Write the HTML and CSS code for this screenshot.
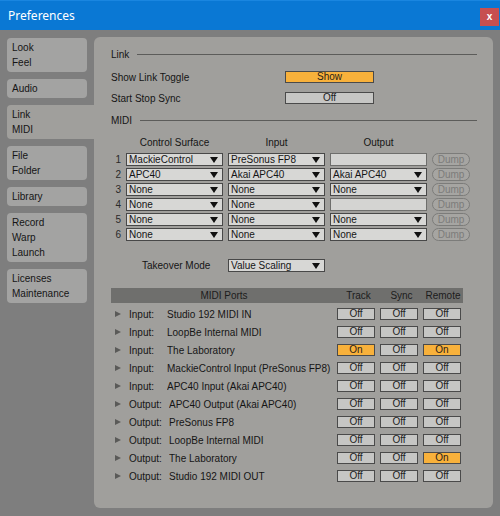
FILE: index.html
```html
<!DOCTYPE html>
<html>
<head>
<meta charset="utf-8">
<link rel="stylesheet" href="styles.css">
</head>
<body>
<div class="titlebar">
  <span class="title">Preferences</span>
  <span class="close">x</span>
</div>
<div class="content">
  <div class="sidebar">
    <div class="tab"><div>Look</div><div>Feel</div></div>
    <div class="tab"><div>Audio</div></div>
    <div class="tab selected"><div>Link</div><div>MIDI</div></div>
    <div class="tab"><div>File</div><div>Folder</div></div>
    <div class="tab"><div>Library</div></div>
    <div class="tab"><div>Record</div><div>Warp</div><div>Launch</div></div>
    <div class="tab"><div>Licenses</div><div>Maintenance</div></div>
  </div>
  <div class="panel">
    <div class="heading">Link</div>
    <div class="setting first"><span class="label">Show Link Toggle</span><span class="btn wide on">Show</span></div>
    <div class="setting"><span class="label">Start Stop Sync</span><span class="btn wide">Off</span></div>
    <div class="heading midi">MIDI</div>

    <div class="surfaces">
      <div class="colhead"></div><div class="colhead">Control Surface</div><div class="colhead">Input</div><div class="colhead">Output</div><div class="colhead"></div>

      <div class="num">1</div><div class="dd">MackieControl</div><div class="dd">PreSonus FP8</div><div class="dd empty"></div><div class="dump">Dump</div>
      <div class="num">2</div><div class="dd">APC40</div><div class="dd">Akai APC40</div><div class="dd">Akai APC40</div><div class="dump">Dump</div>
      <div class="num">3</div><div class="dd">None</div><div class="dd">None</div><div class="dd">None</div><div class="dump">Dump</div>
      <div class="num">4</div><div class="dd">None</div><div class="dd">None</div><div class="dd empty"></div><div class="dump">Dump</div>
      <div class="num">5</div><div class="dd">None</div><div class="dd">None</div><div class="dd">None</div><div class="dump">Dump</div>
      <div class="num">6</div><div class="dd">None</div><div class="dd">None</div><div class="dd">None</div><div class="dump">Dump</div>
    </div>

    <div class="takeover"><span class="tlabel">Takeover Mode</span><div class="dd">Value Scaling</div></div>

    <div class="ports">
      <div class="phead">
        <span class="pname">MIDI Ports</span><span class="pcol">Track</span><span class="pcol">Sync</span><span class="pcol">Remote</span>
      </div>
      <div class="prow"><span class="tri"></span><span class="ptype">Input:</span><span class="pdev">Studio 192 MIDI IN</span><span class="btn">Off</span><span class="btn">Off</span><span class="btn">Off</span></div>
      <div class="prow"><span class="tri"></span><span class="ptype">Input:</span><span class="pdev">LoopBe Internal MIDI</span><span class="btn">Off</span><span class="btn">Off</span><span class="btn">Off</span></div>
      <div class="prow"><span class="tri"></span><span class="ptype">Input:</span><span class="pdev">The Laboratory</span><span class="btn on">On</span><span class="btn">Off</span><span class="btn on">On</span></div>
      <div class="prow"><span class="tri"></span><span class="ptype">Input:</span><span class="pdev">MackieControl Input (PreSonus FP8)</span><span class="btn">Off</span><span class="btn">Off</span><span class="btn">Off</span></div>
      <div class="prow"><span class="tri"></span><span class="ptype">Input:</span><span class="pdev">APC40 Input (Akai APC40)</span><span class="btn">Off</span><span class="btn">Off</span><span class="btn">Off</span></div>
      <div class="prow"><span class="tri"></span><span class="ptype out">Output:</span><span class="pdev">APC40 Output (Akai APC40)</span><span class="btn">Off</span><span class="btn">Off</span><span class="btn">Off</span></div>
      <div class="prow"><span class="tri"></span><span class="ptype out">Output:</span><span class="pdev">PreSonus FP8</span><span class="btn">Off</span><span class="btn">Off</span><span class="btn">Off</span></div>
      <div class="prow"><span class="tri"></span><span class="ptype out">Output:</span><span class="pdev">LoopBe Internal MIDI</span><span class="btn">Off</span><span class="btn">Off</span><span class="btn">Off</span></div>
      <div class="prow"><span class="tri"></span><span class="ptype out">Output:</span><span class="pdev">The Laboratory</span><span class="btn">Off</span><span class="btn">Off</span><span class="btn on">On</span></div>
      <div class="prow"><span class="tri"></span><span class="ptype out">Output:</span><span class="pdev">Studio 192 MIDI OUT</span><span class="btn">Off</span><span class="btn">Off</span><span class="btn">Off</span></div>
    </div>
  </div>
</div>
</body>
</html>
```

FILE: styles.css
```css
* { box-sizing: border-box; }
html, body { margin: 0; padding: 0; }
body {
  width: 500px;
  height: 516px;
  overflow: hidden;
  background: #7e7e7e;
  font-family: "Liberation Sans", Arial, sans-serif;
  font-size: 10px;
  color: #151515;
}

.titlebar {
  height: 30px;
  background: #0a78d4;
  display: flex;
  align-items: center;
  justify-content: space-between;
  padding: 0 1px 0 8px;
  border-top: 1px solid #1a86e0;
}
.title {
  color: #ffffff;
  font-family: "Noto Sans", "Open Sans", sans-serif;
  font-size: 12px;
  margin-top: -1px;
}
.close {
  width: 19px;
  height: 18px;
  background: #c74f50;
  color: #fff;
  font-family: "Liberation Sans", Arial, sans-serif;
  font-size: 10px;
  font-weight: bold;
  display: flex;
  align-items: center;
  justify-content: center;
  margin-top: 2px;
}

.content {
  display: flex;
  padding: 7px 0 0 7px;
}

.sidebar {
  width: 87px;
  padding-top: 1px;
  display: flex;
  flex-direction: column;
  gap: 7px;
}
.tab {
  width: 80px;
  background: #a3a3a2;
  border-radius: 4px;
  padding: 2px 0 2px 5px;
  line-height: 15px;
  font-size: 10px;
}
.tab.selected {
  width: 90px;
  background: #a09f9c;
  border-radius: 4px 0 0 4px;
}

.panel {
  width: 399px;
  height: 471px;
  background: #a09f9c;
  border-radius: 6px;
  padding: 10px 16px 0 17px;
}

.heading {
  display: flex;
  align-items: center;
  height: 14px;
  font-size: 10px;
}
.heading::after {
  content: "";
  flex: 1;
  height: 1px;
  background: #5c5c5a;
  margin-left: 8px;
}
.heading.midi { margin-top: 9px; }

.setting {
  display: flex;
  align-items: center;
  height: 12px;
  margin-top: 9px;
}
.setting.first { margin-top: 10px; }
.label { width: 174px; }

.btn {
  height: 12px;
  border: 1px solid #4a4a4a;
  background: #c6c6c4;
  display: flex;
  align-items: center;
  justify-content: center;
  font-size: 10px;
  line-height: 10px;
  color: #222;
}
.btn.wide { width: 89px; }
.btn.on { background: #f8b13b; color: #2a2218; }

.surfaces {
  display: grid;
  grid-template-columns: 10px 97px 97px 97px 38px;
  column-gap: 5px;
  row-gap: 2px;
  margin-top: 9px;
}
.colhead {
  text-align: center;
  height: 14px;
  line-height: 14px;
  margin-bottom: 1px;
}
.num {
  height: 13px;
  line-height: 13px;
  text-align: right;
  color: #2a2a2a;
}
.dd {
  position: relative;
  height: 13px;
  border: 1px solid #484848;
  background: #d7d7d5;
  padding-left: 2px;
  line-height: 11px;
  white-space: nowrap;
}
.dd::after {
  content: "";
  position: absolute;
  right: 4px;
  top: 3px;
  border-left: 4px solid transparent;
  border-right: 4px solid transparent;
  border-top: 6px solid #111;
}
.dd.empty { border-color: #6e6e6c; background: #d4d4d2; }
.dd.empty::after { display: none; }
.dump {
  height: 13px;
  border: 1px solid #7c7c7a;
  border-radius: 7px;
  color: #7c7c7a;
  background: #a6a5a2;
  text-align: center;
  line-height: 11px;
}

.takeover {
  display: flex;
  align-items: center;
  margin-top: 18px;
}
.tlabel { width: 117px; padding-left: 31px; }
.takeover .dd { width: 97px; }

.ports { margin-top: 16px; width: 352px; }
.phead {
  display: flex;
  align-items: center;
  height: 15px;
  background: #6f6f6d;
  color: #1c1c1c;
}
.pname { width: 226px; text-align: center; }
.pcol { width: 43px; text-align: center; }
.pcol:last-child { width: 40px; }

.prow {
  display: flex;
  align-items: center;
  width: 350px;
  height: 18px;
  padding-top: 4px;
}
.prow .btn { width: 38px; flex: none; margin-left: 5px; }
.prow .btn:nth-of-type(1) { margin-left: 0; }
.tri {
  flex: none;
  width: 0;
  height: 0;
  border-top: 3.5px solid transparent;
  border-bottom: 3.5px solid transparent;
  border-left: 6px solid #5a5a58;
  margin-left: 4px;
  margin-right: 8px;
}
.ptype { width: 38px; flex: none; }
.ptype.out { width: 40px; }
.pdev { flex: 1; min-width: 0; white-space: nowrap; overflow: hidden; }
```
